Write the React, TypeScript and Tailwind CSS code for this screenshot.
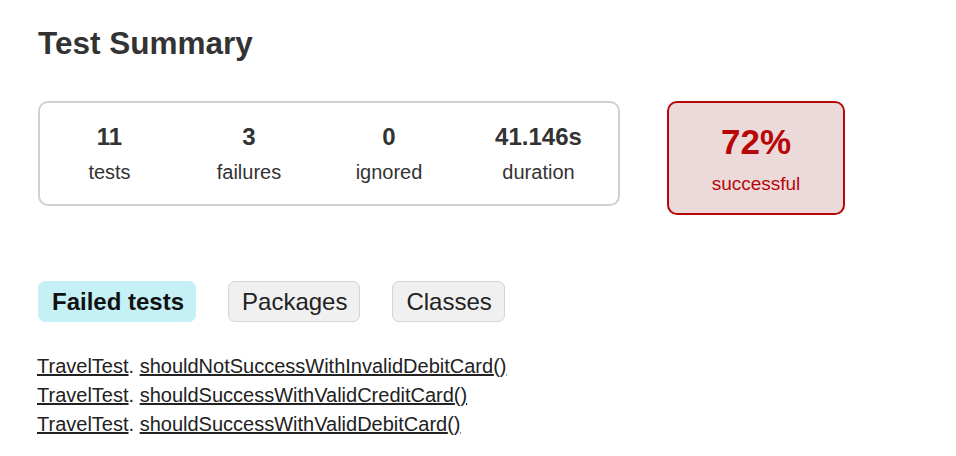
import React from "react";

const stats = [
  { value: "11", label: "tests", w: "w-[139px]" },
  { value: "3", label: "failures", w: "w-[140px]" },
  { value: "0", label: "ignored", w: "w-[140px]" },
  { value: "41.146s", label: "duration", w: "w-[159px]" },
];

const failed = [
  "shouldNotSuccessWithInvalidDebitCard",
  "shouldSuccessWithValidCreditCard",
  "shouldSuccessWithValidDebitCard",
];

export default function App() {
  return (
    <div
      className="min-h-[456px] w-[956px] bg-white pl-[38px] pt-[25px] text-[#333]"
      style={{ fontFamily: '"Liberation Sans", Arial, sans-serif' }}
    >
      <h1 className="text-[31.5px] font-bold leading-[36px] text-[#333]">Test Summary</h1>

      <div className="mt-[40px] flex items-start">
        <div className="flex rounded-[10px] border-2 border-[#d0d0d0] pt-[20px] pb-[20px]">
          {stats.map((s) => (
            <div key={s.label} className={`${s.w} text-center`}>
              <div className="mb-[9px] text-[24px] font-bold leading-[28px]">{s.value}</div>
              <div className="text-[20px] leading-[24px]">{s.label}</div>
            </div>
          ))}
        </div>
        <div className="ml-[47px] w-[178px] rounded-[10px] border-2 border-[#b60808] bg-[#ecdada] pt-[19px] pb-[17px] text-center text-[#b60808]">
          <div className="mb-[10px] text-[35px] font-bold leading-[40px]">72%</div>
          <div className="text-[19px] leading-[24px]">successful</div>
        </div>
      </div>

      <div className="mt-[66px] flex">
        <div className="mr-[32px] rounded-[7px] border border-[#c5f0f5] bg-[#c5f0f5] pl-[13px] pr-[11px] py-[5px] text-[24px] font-bold leading-[29px] text-[#111]">
          Failed tests
        </div>
        <div className="mr-[32px] rounded-[7px] border border-[#d4d4d4] bg-[#f0f0f0] pl-[13px] pr-[12px] py-[5px] text-[24px] leading-[29px] text-[#222]">
          Packages
        </div>
        <div className="rounded-[7px] border border-[#d4d4d4] bg-[#f0f0f0] pl-[13px] pr-[12px] py-[5px] text-[24px] leading-[29px] text-[#222]">
          Classes
        </div>
      </div>

      <div className="mt-[30px] -ml-px text-[20px] leading-[29px] text-[#222]">
        {failed.map((m) => (
          <div key={m}>
            <a href="#" className="underline">TravelTest</a>.{" "}
            <a href="#" className="underline">{m}()</a>
          </div>
        ))}
      </div>
    </div>
  );
}
